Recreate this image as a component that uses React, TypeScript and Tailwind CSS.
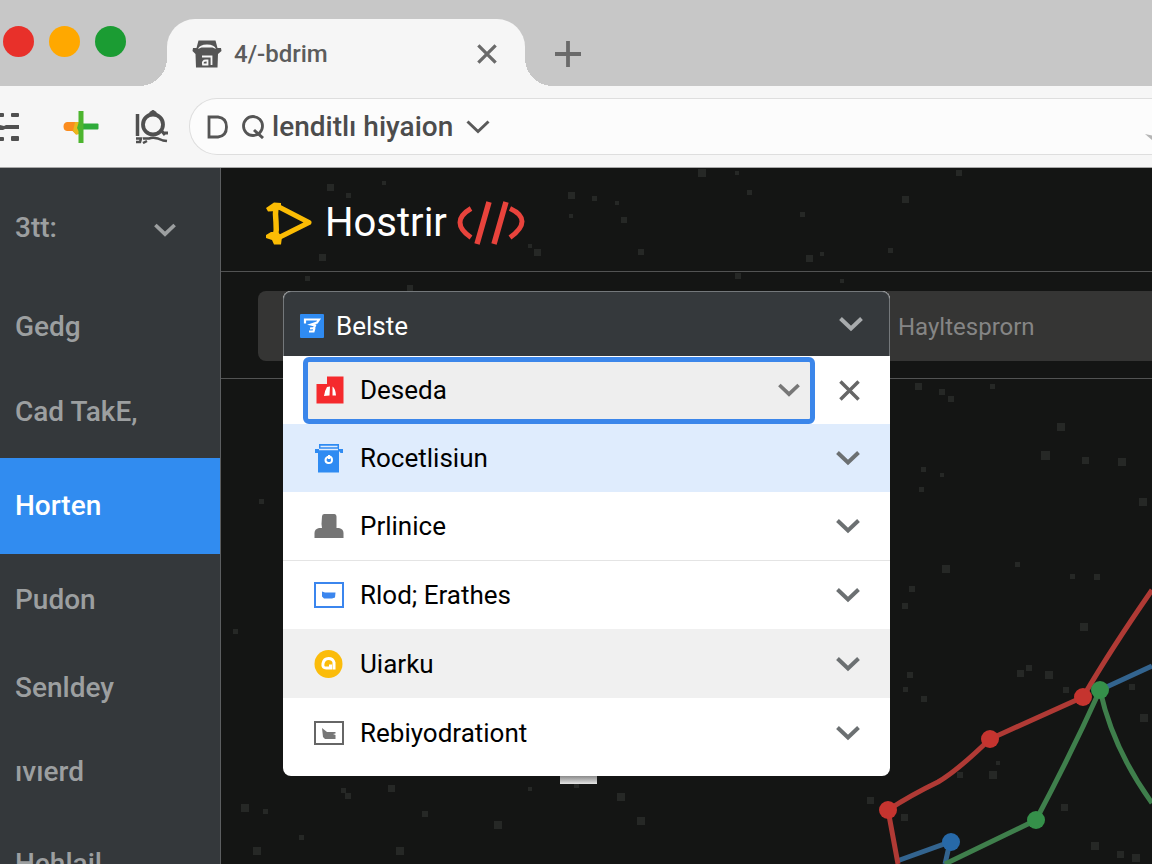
import type { ReactNode } from 'react';
import clsx from 'clsx';

interface NavItem {
  label: string;
  height: string;
  active?: boolean;
  expandable?: boolean;
}

const navItems: NavItem[] = [
  { label: '3tt:', height: 'h-[120px]', expandable: true },
  { label: 'Gedg', height: 'h-[78px]' },
  { label: 'Cad TakE,', height: 'h-[92px]' },
  { label: 'Horten', height: 'h-[96px]', active: true },
  { label: 'Pudon', height: 'h-[92px]' },
  { label: 'Senldey', height: 'h-[84px]' },
  { label: 'ıvıerd', height: 'h-[84px]' },
  { label: 'Hehlail', height: 'h-[100px]' },
];

interface Option {
  label: string;
  icon: ReactNode;
  className: string;
}

const options: Option[] = [
  { label: 'Rocetlisiun', icon: <BinIcon />, className: 'h-[68px] bg-[#dfecfd]' },
  { label: 'Prlinice', icon: <PersonIcon />, className: 'h-[68px] bg-white' },
  { label: 'Rlod; Erathes', icon: <BlueFrameIcon />, className: 'h-[69px] bg-white border-t border-[#e4e4e4]' },
  { label: 'Uiarku', icon: <CoinIcon />, className: 'h-[69px] bg-[#f0f0f0]' },
  { label: 'Rebiyodrationt', icon: <GrayFrameIcon />, className: 'h-[69px] bg-white' },
];

// x, y, size
const specks = [
  [106, 16, 7], [125, 25, 5], [161, 13, 4], [347, 24, 7], [371, 28, 5], [348, 46, 4],
  [98, 86, 7], [313, 81, 7], [307, 76, 4], [84, 108, 5], [186, 117, 6], [477, 1, 8],
  [514, 3, 4], [526, 22, 5], [394, 33, 4], [400, 49, 6], [417, 81, 6], [579, 44, 5],
  [585, 87, 7], [599, 84, 4], [681, 28, 7], [735, 2, 6], [667, 80, 5], [514, 105, 6],
  [619, 111, 4], [694, 215, 7], [718, 221, 6], [727, 228, 6], [769, 216, 5], [836, 255, 8],
  [897, 290, 8], [861, 289, 7], [820, 283, 9], [700, 299, 5], [719, 305, 4], [698, 319, 5],
  [918, 330, 8], [721, 397, 8], [794, 394, 5], [849, 406, 5], [688, 418, 6], [681, 435, 6],
  [873, 406, 6], [859, 455, 8], [824, 503, 8], [796, 502, 7], [805, 497, 6], [686, 504, 6],
  [682, 519, 5], [700, 528, 6], [842, 519, 6], [908, 516, 6], [919, 546, 8], [768, 603, 8],
  [736, 604, 6], [775, 593, 4], [646, 629, 7], [680, 646, 7], [840, 636, 7], [870, 674, 8],
  [896, 683, 7], [911, 686, 8], [20, 636, 8], [42, 641, 5], [78, 667, 5], [32, 679, 8],
  [175, 679, 8], [167, 617, 7], [201, 643, 6], [273, 653, 8], [307, 619, 4], [396, 625, 8],
  [416, 649, 8], [120, 620, 5], [124, 625, 6], [353, 615, 5], [12, 461, 5], [38, 331, 5],
];

function Chevron({ className, strokeWidth = 3 }: { className?: string; strokeWidth?: number }) {
  return (
    <svg viewBox="0 0 24 16" className={clsx('h-4 shrink-0', className)} fill="none" stroke="currentColor" strokeWidth={strokeWidth} aria-hidden>
      <path d="M1.500 2.500 L12 12.500 L22.500 2.500" />
    </svg>
  );
}

function Cross({ className }: { className?: string }) {
  return (
    <svg viewBox="0 0 22 22" className={className} fill="none" stroke="currentColor" strokeWidth="3.600" aria-hidden>
      <path d="M1.500 1.500 L20.500 20.500 M20.500 1.500 L1.500 20.500" />
    </svg>
  );
}

function TabIcon() {
  return (
    <svg viewBox="0 0 30 28" className="h-7 w-[30px] shrink-0" aria-hidden>
      <path d="M6.500.5h17l2 7.500H29l.5 3-3.500 3-.5 13.500H4L3.500 14 .5 11l.5-3h3.500z" fill="#555" />
      <path d="M6 9q1.500-4.500 9-4.500T24 9l-3.500-1.500h-11z" fill="#f6f6f6" />
      <path d="M10 16.500h9.500v8.500M15.500 24.500H11q-1-4 3-4h1.500z" fill="none" stroke="#f6f6f6" strokeWidth="1.800" />
    </svg>
  );
}

function GridIcon() {
  return (
    <svg viewBox="0 0 20 30" className="h-[30px] w-5 shrink-0" fill="#505050" aria-hidden>
      <rect x="-3" y="1" width="7" height="4" rx="1" />
      <rect x="11" y="1" width="8" height="4" rx="1" />
      <path d="M0 13l4 1 2-1h13v4H5l-2 1H0z" />
      <rect x="-3" y="25" width="7" height="4" rx="1" />
      <rect x="11" y="24" width="8" height="5" rx="1" />
    </svg>
  );
}

function PlusIcon() {
  return (
    <svg viewBox="0 0 36 34" className="h-[34px] w-9 shrink-0" aria-hidden>
      <path d="M18 13.500h16.500q1 0 1 1v4q0 1-1 1H18z" fill="#2fab3a" />
      <path d="M4 12h12v12l-3 .5L9.500 21H4q-3.500-.500-3.500-4.500T4 12z" fill="#fb8c1e" />
      <path d="M12 12h4v12l-3 .5-3-3.500z" fill="#e9b81c" />
      <path d="M15.500 1h5v32h-5V21l-1.500-3 1.500-5z" fill="#4db52f" />
    </svg>
  );
}

function SearchBadgeIcon() {
  return (
    <svg viewBox="0 0 34 34" className="h-[34px] w-[34px] shrink-0" fill="none" stroke="#505050" aria-hidden>
      <path d="M2.500 4v22" strokeWidth="3.500" />
      <circle cx="18" cy="14.500" r="10" strokeWidth="3.800" />
      <path d="M15 3.500l3-2 3 2M26 20l4 5M29 23h4" strokeWidth="3" />
      <path d="M1 28.500h5l-1 3.500H1M8 28.500h6q6-2 14 2l4 .5M12 31l-4 2" strokeWidth="2.500" />
    </svg>
  );
}

function LetterDIcon() {
  return (
    <svg viewBox="0 0 22 24" className="h-6 w-[22px] shrink-0" fill="none" stroke="#555" strokeWidth="2.800" aria-hidden>
      <path d="M2 2h9q8.500 1 8.500 10T11 22H2z" />
    </svg>
  );
}

function LensIcon() {
  return (
    <svg viewBox="0 0 22 24" className="h-6 w-[22px] shrink-0" fill="none" stroke="#555" strokeWidth="2.800" aria-hidden>
      <circle cx="11" cy="11" r="9.500" />
      <path d="M12 15l9 8" strokeWidth="3" />
    </svg>
  );
}

function LogoMark() {
  return (
    <svg viewBox="0 0 48 44" className="h-11 w-12 shrink-0" fill="none" stroke="#fbbc04" strokeLinejoin="round" aria-hidden>
      <path d="M14 6L44 21.500L13 37" strokeWidth="5" />
      <path d="M11 5q-1 8 0 16t-1 16" strokeWidth="5.500" />
      <path d="M1 7l8-5.500 7 .5v5l-4 3-9 .5zM1 34l5-3h7l4 5-1 7.500H9L7 39l-6-2z" fill="#fbbc04" stroke="none" />
    </svg>
  );
}

function CodeMark() {
  return (
    <svg viewBox="0 0 68 44" className="h-11 w-[68px] shrink-0" fill="none" stroke="#e8433c" strokeWidth="5.500" aria-hidden>
      <path d="M14 7.500Q3 14 3 21.500T14 36.500M53 7.500Q65 13 65 20.500T53 36.500" strokeWidth="5" />
      <path d="M32 1L20 43M49 1L37 43" />
    </svg>
  );
}

function HeaderIcon() {
  return (
    <svg viewBox="0 0 24 24" className="h-6 w-6 shrink-0" aria-hidden>
      <rect width="24" height="24" rx="1" fill="#2f8bf2" />
      <path d="M5 9.500V5.500h14l-2 3-6 2 4 1-1 2.500-4 .5M14.500 14l-1 3.500H9" fill="none" stroke="#fff" strokeWidth="2.200" />
    </svg>
  );
}

function RedIcon() {
  return (
    <svg viewBox="0 0 28 28" className="h-7 w-7 shrink-0" aria-hidden>
      <path d="M11 .5h16.500v27H.5V8H11z" fill="#f52a2d" />
      <path d="M11 11l3-.5-.500 9-5.500.5q.5-5 3-9zM16.500 10.500q3 2 3.500 9h-3.500z" fill="#fff" />
    </svg>
  );
}

function BinIcon() {
  return (
    <svg viewBox="0 0 30 30" className="h-[30px] w-[30px] shrink-0" aria-hidden>
      <path d="M5 1h20v5h4v4h-2.500l-1.500-2v21.500H4V10H1V6h4z" fill="#2f8bf2" />
      <path d="M6.500 3.500h17M5 6.500h19" stroke="#dfecfd" strokeWidth="1.300" />
      <path d="M15 13.500q3 0 3 3.500t-4 3q-2.500-.500-2.500-3t3.500-3.500zM15 12v4" fill="none" stroke="#fff" strokeWidth="2" />
    </svg>
  );
}

function PersonIcon() {
  return (
    <svg viewBox="0 0 30 26" className="h-[26px] w-[30px] shrink-0" aria-hidden>
      <path d="M10 1h10.500q2 0 2 2.500V15h2.500q4.500 1 4.500 5v5H.5v-5q0-4 4.500-5h3l-.5-4L8 3.500Q8 1 10 1z" fill="#757575" />
    </svg>
  );
}

function BlueFrameIcon() {
  return (
    <svg viewBox="0 0 30 26" className="h-[26px] w-[30px] shrink-0" aria-hidden>
      <rect x="1" y="1" width="28" height="24" fill="#fff" stroke="#3b86ee" strokeWidth="2" />
      <path d="M8 9.500l3 1h10.500l-.5 5-3 1H10l-2-2z" fill="#3b86ee" />
    </svg>
  );
}

function CoinIcon() {
  return (
    <svg viewBox="0 0 30 30" className="h-[30px] w-[30px] shrink-0" aria-hidden>
      <circle cx="14.500" cy="15" r="14" fill="#fbbc0b" />
      <path d="M20 20.500V13.500q-1-4-5.500-4T9 14.500t4 4.500h3.500v-3.500" fill="none" stroke="#fff" strokeWidth="3" />
    </svg>
  );
}

function GrayFrameIcon() {
  return (
    <svg viewBox="0 0 30 24" className="h-6 w-[30px] shrink-0" aria-hidden>
      <rect x="1" y="1" width="28" height="22" fill="#fff" stroke="#666" strokeWidth="2" />
      <path d="M8 7l5 4h8.500v1.500l-2.500.5 2.500 1v4H11l-2-2z" fill="#777" />
    </svg>
  );
}

function BrowserTabs() {
  return (
    <div className="flex h-[86px] shrink-0 bg-[#c7c7c7]">
      <div className="flex gap-[15px] pt-[26px] pl-[3px]">
        <span className="size-[31px] rounded-full bg-[#e8302a]" />
        <span className="size-[31px] rounded-full bg-[#ffa800]" />
        <span className="size-[31px] rounded-full bg-[#1b9c33]" />
      </div>
      {/* tab shape: two foot curves around the rounded body */}
      <div className="ml-[13px] flex">
        <span className="mt-[58px] h-7 w-7 bg-[radial-gradient(circle_at_top_left,transparent_28px,#f6f6f6_28px)]" />
        <div className="mt-[19px] flex w-[358px] items-center rounded-t-[28px] bg-[#f6f6f6] pt-0.5 pr-7 pl-[25px]">
          <TabIcon />
          <span className="ml-3 grow text-[24px] font-medium text-[#5c5c5c]">4/-bdrim</span>
          <button type="button" aria-label="Close tab" className="text-[#6a6a6a]">
            <Cross className="h-5 w-5" />
          </button>
        </div>
        <span className="mt-[58px] h-7 w-7 bg-[radial-gradient(circle_at_top_right,transparent_28px,#f6f6f6_28px)]" />
      </div>
      <button type="button" aria-label="New tab" className="mt-[41px] ml-0.5 h-[26px] w-[26px] text-[#6a6a6a]">
        <svg viewBox="0 0 26 26" className="h-[26px] w-[26px]" stroke="currentColor" strokeWidth="3.800" aria-hidden>
          <path d="M13 0v26M0 13h26" />
        </svg>
      </button>
    </div>
  );
}

function Toolbar() {
  return (
    <div className="flex h-[82px] shrink-0 items-center border-b border-[#a8a8a8] bg-[#f6f6f6]">
      <GridIcon />
      <span className="w-[43px]" />
      <PlusIcon />
      <span className="w-9" />
      <SearchBadgeIcon />
      <div className="ml-5 flex h-[57px] grow items-center overflow-hidden rounded-l-[28px] border border-r-0 border-[#dedede] bg-[#fcfcfc] pl-[17px]">
        <LetterDIcon />
        <span className="w-[13px]" />
        <LensIcon />
        <input aria-label="Address" defaultValue="lenditlı hiyaion" className="ml-2 w-[188px] bg-transparent text-[28px] font-medium text-[#4c4c4c] outline-none" />
        <button type="button" aria-label="Suggestions" className="ml-[6px] text-[#5a5a5a]">
          <Chevron className="w-6" />
        </button>
        <svg viewBox="0 0 7 6" className="mt-5 ml-auto h-[6px] w-[7px] shrink-0" aria-hidden>
          <path d="M0 0l7 1.500V6z" fill="#b5b5b5" />
        </svg>
      </div>
    </div>
  );
}

function Sidebar() {
  return (
    <nav className="w-[221px] shrink-0 border-r border-[#5c5e60] bg-[#34383b]">
      {navItems.map((item) => (
        <a
          key={item.label}
          href="#"
          className={clsx(
            'flex items-center justify-between pr-11 pl-[15px] text-[28px] font-medium',
            item.height,
            item.active ? 'bg-[#318cf0] text-white' : 'text-[#9c9fa0]',
          )}
        >
          {item.label}
          {item.expandable && <Chevron className="mt-1 w-[22px]" strokeWidth={4} />}
        </a>
      ))}
    </nav>
  );
}

function Dropdown() {
  return (
    <div className="absolute top-0 left-[25px] w-[607px]">
      <div className="overflow-hidden rounded-lg bg-white">
        <button type="button" aria-expanded="true" className="flex h-[65px] w-full items-center rounded-t-lg border border-b-0 border-[#74787b] bg-[#35393c] pt-1 pr-[26px] pl-4 text-left text-[26px] text-white">
          <HeaderIcon />
          <span className="ml-3 grow">Belste</span>
          <Chevron className="mb-1 w-6 text-[#a8abad]" strokeWidth={4} />
        </button>
        <div className="flex h-[68px] items-center pl-5">
          <div className="flex h-[67px] w-[512px] items-center rounded-md border-[5px] border-[#3b86ea] bg-[#eeeeee] pr-[10px] pl-2">
            <RedIcon />
            <select aria-label="Selected host" className="ml-4 grow appearance-none bg-transparent text-[26px] text-black outline-none">
              <option>Deseda</option>
            </select>
            <Chevron className="w-[22px] text-[#777]" strokeWidth={4} />
          </div>
          <button type="button" aria-label="Clear" className="ml-6 text-[#666]">
            <Cross className="h-[21px] w-[21px]" />
          </button>
        </div>
        {options.map((option) => (
          <button
            key={option.label}
            type="button"
            className={clsx('flex w-full items-center pr-[30px] pl-[31px] text-left text-[26px] text-black', option.className)}
          >
            {option.icon}
            <span className="ml-4 grow">{option.label}</span>
            <Chevron className="w-6 text-[#6c7072]" strokeWidth={4} />
          </button>
        ))}
        <div className="h-[9px]" />
      </div>
      <div className="ml-[277px] h-2 w-[37px] bg-linear-to-b from-[#8a8a8a] to-[#e6e6e6]" />
    </div>
  );
}

function Specks() {
  return (
    <svg viewBox="0 0 931 696" preserveAspectRatio="xMinYMin slice" className="pointer-events-none absolute inset-0 h-full w-full" fill="#262826" aria-hidden>
      {specks.map(([x, y, size]) => (
        <rect key={`${x}-${y}`} x={x} y={y} width={size} height={size} />
      ))}
    </svg>
  );
}

function Chart() {
  return (
    <svg viewBox="0 0 931 485" preserveAspectRatio="xMaxYMax slice" className="relative min-h-0 w-full flex-1" aria-label="Line chart">
      <g fill="none" strokeWidth="5">
        <path d="M879 311L931 287M676 482L729 463L724 485" stroke="#33648f" />
        <path d="M724 485L815 441Q850 375 879 311Q892 370 931 424" stroke="#3f7f4c" />
        <path d="M677 485L667 431Q690 416 717 403Q736 392 769 360L862 318Q890 270 931 211" stroke="#b03a35" />
      </g>
      <circle cx="730" cy="463" r="9" fill="#2769a8" />
      <circle cx="815" cy="441" r="9" fill="#35904a" />
      <g fill="#c5342f">
        <circle cx="667" cy="431" r="9" />
        <circle cx="769" cy="360" r="9" />
        <circle cx="862" cy="318" r="9" />
      </g>
      <circle cx="879" cy="311" r="9" fill="#35904a" />
    </svg>
  );
}

export default function App() {
  return (
    <div className="flex h-screen flex-col overflow-hidden bg-[#141514] font-['Roboto','Noto_Sans',sans-serif] leading-none">
      <BrowserTabs />
      <Toolbar />
      <div className="flex min-h-0 flex-1">
        <Sidebar />
        <main className="relative flex min-w-0 flex-1 flex-col bg-[#141514]">
          <Specks />
          <header className="relative flex h-[104px] shrink-0 items-center border-b border-[#525353] pt-[6px] pl-11">
            <LogoMark />
            <h1 className="mr-[10px] ml-3 text-[40px] text-white">Hostrir</h1>
            <CodeMark />
          </header>
          <div className="relative z-10 h-[107px] shrink-0 border-b border-[#525353] pt-[19px] pl-[37px]">
            <div className="relative flex h-[70px] items-center rounded-l-lg bg-[#353534] pl-[640px]">
              <input aria-label="Filter" placeholder="Hayltesprorn" className="min-w-0 grow bg-transparent pt-0.5 text-[24px] outline-none placeholder:text-[#858585]" />
              <Dropdown />
            </div>
          </div>
          <Chart />
        </main>
      </div>
    </div>
  );
}
